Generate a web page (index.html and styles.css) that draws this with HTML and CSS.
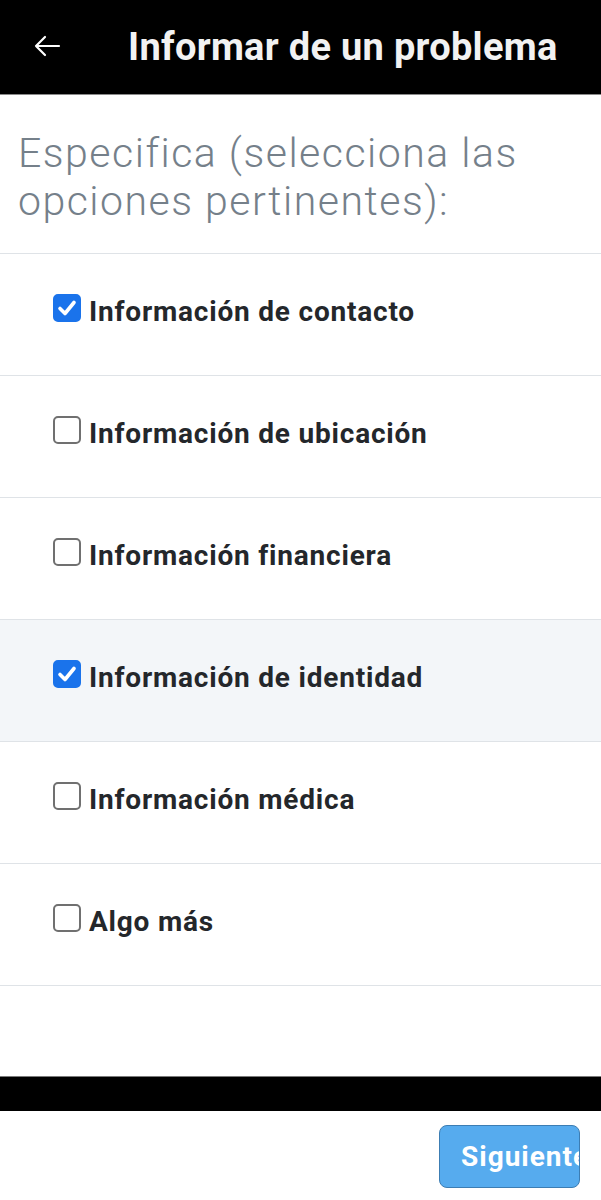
FILE: index.html
```html
<!DOCTYPE html>
<html lang="es">
<head>
<meta charset="utf-8">
<title>Informar de un problema</title>
<link rel="stylesheet" href="styles.css">
</head>
<body>
<div class="page">
  <header class="topbar">
    <span class="back">
      <svg width="28" height="22" viewBox="0 0 28 22"><path d="M26 11H3M12 2L3 11l9 9" fill="none" stroke="#fff" stroke-width="2.2" stroke-linecap="round" stroke-linejoin="round"/></svg>
    </span>
    <h1 class="title">Informar de un problema</h1>
  </header>
  <main class="content">
    <h2 class="prompt">Especifica (selecciona las opciones pertinentes):</h2>
    <ul class="options">
      <li class="option"><span class="box checked"><svg viewBox="0 0 28 28" width="28" height="28"><path d="M7 14.5l5 5 9-11" fill="none" stroke="#fff" stroke-width="3.6" stroke-linecap="round" stroke-linejoin="round"/></svg></span><span class="label">Información de contacto</span></li>
      <li class="option"><span class="box"></span><span class="label">Información de ubicación</span></li>
      <li class="option"><span class="box"></span><span class="label">Información financiera</span></li>
      <li class="option active"><span class="box checked"><svg viewBox="0 0 28 28" width="28" height="28"><path d="M7 14.5l5 5 9-11" fill="none" stroke="#fff" stroke-width="3.6" stroke-linecap="round" stroke-linejoin="round"/></svg></span><span class="label">Información de identidad</span></li>
      <li class="option"><span class="box"></span><span class="label">Información médica</span></li>
      <li class="option"><span class="box"></span><span class="label">Algo más</span></li>
    </ul>
  </main>
  <div class="navbar"></div>
  <footer class="footer">
    <button class="next">Siguiente</button>
  </footer>
</div>
</body>
</html>
```

FILE: styles.css
```css
* { box-sizing: border-box; }
html, body { margin: 0; padding: 0; background: #fff; }
body { font-family: Roboto, "Noto Sans", "Liberation Sans", sans-serif; }
.page { width: 601px; height: 1200px; display: flex; flex-direction: column; overflow: hidden; }
.topbar {
  height: 95px;
  background: #000;
  border-bottom: 1px solid #8a8a8a;
  display: flex;
  align-items: center;
  padding-left: 33px;
  flex-shrink: 0;
}
.back { display: flex; width: 28px; height: 22px; margin-top: -2px; }
.title {
  margin: 0 0 0 67px;
  color: #f2f2f2;
  font-size: 38px;
  font-weight: 700;
  letter-spacing: 0.3px;
}
.content { flex: 1; display: flex; flex-direction: column; }
.prompt {
  margin: 0;
  padding: 34px 10px 28px 18px;
  font-size: 41px;
  line-height: 48px;
  font-weight: 300;
  letter-spacing: 1.5px;
  color: #75808a;
}
.options { list-style: none; margin: 0; padding: 0; border-top: 1px solid #dfe3e7; }
.option {
  height: 122px;
  border-bottom: 1px solid #dfe3e7;
  display: flex;
  align-items: center;
  padding-left: 53px;
  padding-bottom: 6px;
}
.option.active { background: #f3f6f9; }
.box {
  width: 28px;
  height: 28px;
  border: 2px solid #707070;
  border-radius: 5px;
  background: #fff;
  margin-right: 8px;
  margin-bottom: 8px;
  flex-shrink: 0;
  display: flex;
  align-items: center;
  justify-content: center;
}
.box.checked { background: #1a73eb; border-color: #1a73eb; }
.box svg { display: block; flex-shrink: 0; }
.label { font-size: 28px; font-weight: 700; letter-spacing: 0.8px; color: #24272b; }
.navbar {
  height: 35px;
  background: #000;
  border-top: 1px solid #7a7a7a;
  flex-shrink: 0;
}
.footer {
  height: 89px;
  display: flex;
  justify-content: flex-end;
  align-items: flex-start;
  padding: 14px 21px 0 0;
  flex-shrink: 0;
}
.next {
  width: 141px;
  height: 63px;
  background: #56abee;
  border: 1.5px solid #3c7db3;
  border-radius: 8px;
  color: #fff;
  font-family: Roboto, "Noto Sans", sans-serif;
  font-size: 28px;
  font-weight: 700;
  letter-spacing: 1px;
  padding: 0 0 0 21px;
  text-align: left;
  white-space: nowrap;
  overflow: hidden;
}
```
